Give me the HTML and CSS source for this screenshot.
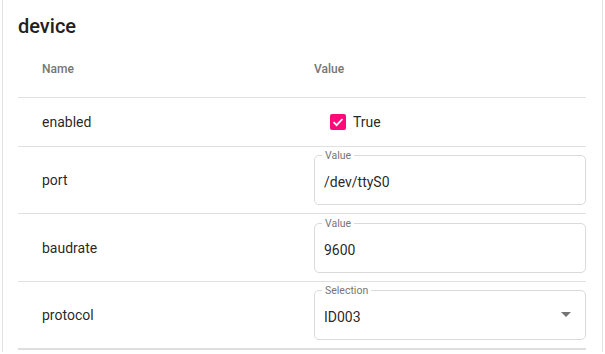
FILE: index.html
```html
<!DOCTYPE html>
<html lang="en">
<head>
  <meta charset="UTF-8">
  <meta name="viewport" content="width=device-width, initial-scale=1.0">
  <title>device</title>
  <link rel="stylesheet" href="styles.css">
</head>
<body>

<div class="card">
  <h2 class="card-title">device</h2>

  <div class="props">
    <div class="row row-head">
      <div class="cell-name">Name</div>
      <div class="cell-value">Value</div>
    </div>

    <!-- boolean -->
    <div class="row row-check">
      <div class="cell-name">enabled</div>
      <div class="cell-value">
        <label class="check">
          <span class="check-box">
            <svg width="16" height="16" viewBox="0 0 16 16">
              <polyline points="3.5,8.2 6.6,11.2 12.5,5" fill="none" stroke="#fff" stroke-width="1.8"/>
            </svg>
          </span>
          True
        </label>
      </div>
    </div>

    <!-- text fields -->
    <div class="row">
      <div class="cell-name">port</div>
      <div class="cell-value">
        <div class="field">
          <span class="field-label">Value</span>
          <span class="field-text">/dev/ttyS0</span>
        </div>
      </div>
    </div>

    <div class="row row-tall">
      <div class="cell-name">baudrate</div>
      <div class="cell-value">
        <div class="field">
          <span class="field-label">Value</span>
          <span class="field-text">9600</span>
        </div>
      </div>
    </div>

    <!-- select -->
    <div class="row row-last">
      <div class="cell-name">protocol</div>
      <div class="cell-value">
        <div class="field">
          <span class="field-label">Selection</span>
          <span class="field-text">ID003</span>
          <span class="field-arrow"></span>
        </div>
      </div>
    </div>
  </div>
</div>

</body>
</html>
```

FILE: styles.css
```css
body {
  font-family: 'Roboto', 'Liberation Sans', sans-serif;
  background-color: #fff;
  margin: 0;
  padding: 0 2px;
  color: rgba(0, 0, 0, 0.87);
}

.card {
  border: 1px solid #e2e2e2;
  border-top: none;
  border-bottom: none;
  padding: 0 16px 2px 15px;
}

.card-title {
  font-size: 20px;
  font-weight: 500;
  line-height: 24px;
  color: #212121;
  margin: 0 0 3px 0;
  padding-top: 14px;
}

.row {
  display: grid;
  grid-template-columns: 296px 1fr;
  align-items: center;
  box-sizing: border-box;
  height: 67px;
  border-bottom: 1px solid #e0e0e0;
  font-size: 14px;
}

.row-head {
  height: 57px;
  font-size: 12px;
  font-weight: 500;
  color: #757575;
}

.row-check {
  height: 49px;
}

.row-tall {
  height: 68px;
}

.row-last {
  height: 68px;
  border-bottom: 2px solid #dedede;
}

.cell-name {
  padding-left: 24px;
}

.check {
  display: flex;
  align-items: center;
  margin-left: 16px;
  font-size: 14px;
}

.check-box {
  width: 16px;
  height: 16px;
  border-radius: 2px;
  background-color: #ff0a78;
  margin-right: 7px;
  display: flex;
}

.field {
  position: relative;
  display: flex;
  align-items: center;
  border: 1px solid #dadada;
  border-radius: 5px;
  padding: 16px 14px 12px 9px;
}

.field-label {
  position: absolute;
  top: -6px;
  left: 7px;
  padding: 0 3px;
  background-color: #fff;
  font-size: 10.5px;
  line-height: 12px;
  color: #757575;
}

.field-text {
  font-size: 14px;
  line-height: 20px;
}

.field-arrow {
  margin-left: auto;
  margin-bottom: 5px;
  width: 0;
  height: 0;
  border-left: 5px solid transparent;
  border-right: 5px solid transparent;
  border-top: 5px solid #757575;
}
```
